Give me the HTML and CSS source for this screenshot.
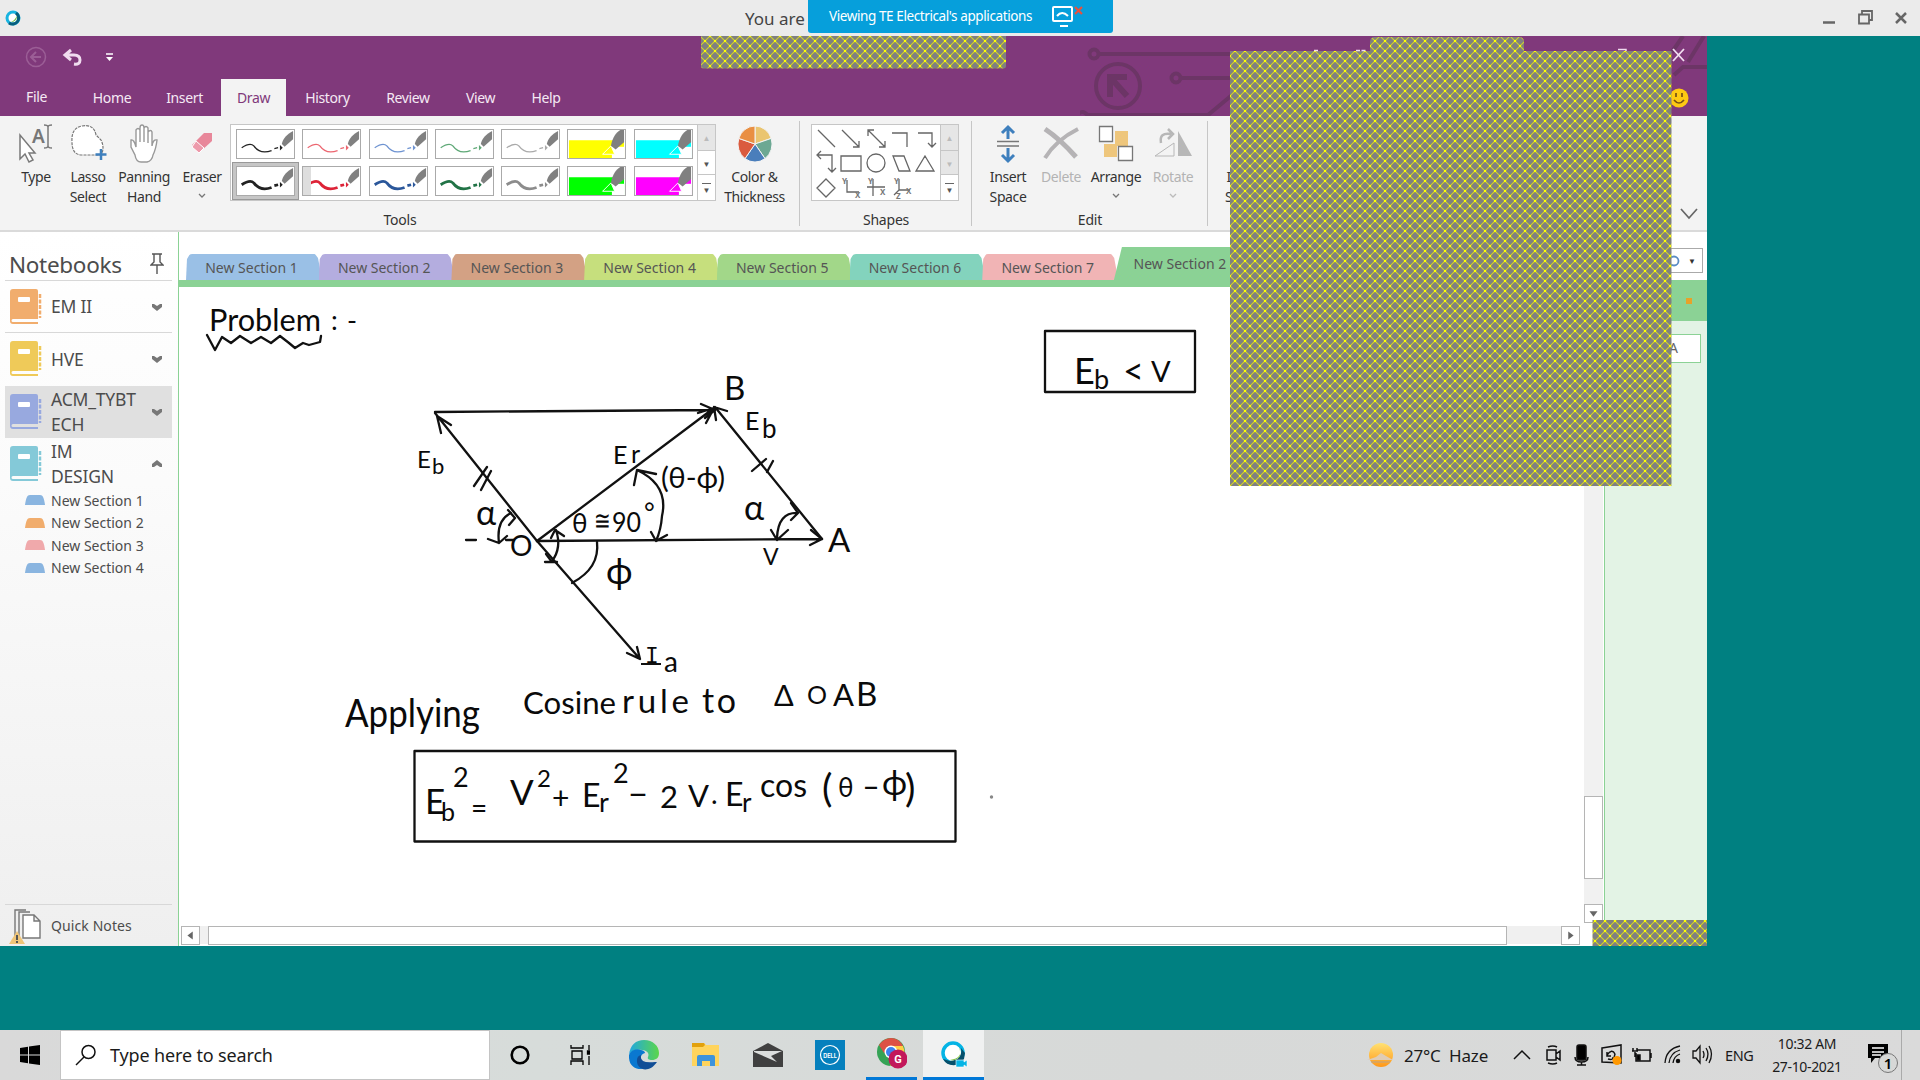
FILE: index.html
```html
<!DOCTYPE html>
<html lang="en">
<head>
<meta charset="utf-8">
<title>Viewing TE Electrical's applications</title>
<link rel="stylesheet" href="styles.css">
</head>
<body>
<svg class="defs" width="0" height="0">
  <symbol id="pen" viewBox="0 0 59 30">
    <path d="M4 19C10 15 14 14 17 17C22 24 28 25 36 22M39 20l4-1" fill="none" stroke="currentColor" stroke-width="var(--w)"/>
    <path d="M45 16l3 3-3 3z" fill="currentColor"/>
    <path d="M59 1v9L50 18l-3-3C48 9 53 4 59 1z" fill="#808080"/>
  </symbol>
  <symbol id="marker" viewBox="0 0 59 30">
    <path d="M0 11h59v19H0z" fill="currentColor"/>
    <path d="M46 18h13v12H46z" fill="#fff"/>
    <path d="M36 26l9-9 4 9z" fill="currentColor" stroke="#fff"/>
    <path d="M59 0v13L50 21l-5-4C46 9 51 2 55 0z" fill="#808080"/>
  </symbol>
  <symbol id="book" viewBox="0 0 32 36">
    <path d="M3 0h23q2 0 2 2v28H3q-1.500 0-1.500 1.500T3 33h25v2H3q-3 0-3-3V3q0-3 3-3z" fill="currentColor"/>
    <rect x="8" y="8" width="12" height="5" rx="1" fill="#fff"/>
    <path d="M30 5v24" stroke="currentColor" stroke-width="2.500" stroke-dasharray="4 1.500"/>
  </symbol>
  <symbol id="down" viewBox="0 0 10 8"><path d="M0 1h2l3 2 3-2h2v3L5 8 0 4z" fill="#777"/></symbol>
  <symbol id="caret" viewBox="0 0 8 6"><path d="M1 1l3 3 3-3" fill="none" stroke="currentColor" stroke-width="1.300"/></symbol>
  <symbol id="tab" viewBox="0 0 20 10"><path d="M0 10C1 3 2 0 5 0h10c3 0 4 3 5 10z" fill="currentColor"/></symbol>
</svg>

<header class="titlebar">
  <svg class="logo" width="16" height="16" viewBox="0 0 16 16"><circle cx="8" cy="8" r="6" fill="#fff" stroke="#18b3e0" stroke-width="3"/><path d="M11 3a6 6 0 0 1-7 10" fill="none" stroke="#075e7c" stroke-width="3"/><path d="M12 6c0 4-3 6-6 6 3-1 4-3 6-6z" fill="#6cbb45"/></svg>
  <span class="you">You are</span>
  <div class="wincontrols">
    <svg width="100" height="36" viewBox="0 0 100 36" fill="none" stroke="#666"><path d="M3 22.500h12" stroke-width="2.500"/><path d="M39 14.500h10v9H39zM42 14v-3h10v9h-3" stroke-width="1.800"/><path d="M76 13l10 10M86 13L76 23" stroke-width="2.500"/></svg>
  </div>
  <div class="banner"><span>Viewing TE Electrical's applications</span>
    <svg width="32" height="24" viewBox="0 0 32 24"><rect x="2" y="3" width="19" height="14" rx="1" fill="none" stroke="#fff" stroke-width="2"/><path d="M6 12q5-6 11 0M9 22h8" fill="none" stroke="#fff" stroke-width="2"/><path d="M24 3l7 7M31 3l-7 7" stroke="#e8503f" stroke-width="2.200"/></svg>
  </div>
</header>

<main class="desktop">
<section class="app">
  <div class="apphead">
    <svg class="circuit" width="627" height="80" viewBox="1080 36 627 80" fill="none" stroke="#6c3566" stroke-width="4">
      <circle cx="1118" cy="86" r="22"/><path d="M1110 97V77h17M1110 77l17 19" stroke-width="6"/>
      <circle cx="1094" cy="54" r="4.500"/><path d="M1099 54h140"/><circle cx="1176" cy="78" r="4.500"/><path d="M1181 78h50M1087 115h121l24-20"/><path d="M1076 117q6-10 13 0"/>
      <path d="M1672 52l11-16M1674 75l9-8h24M1688 62l16-26"/>
    </svg>
    <div class="quick">
      <svg width="110" height="43" viewBox="0 0 110 43" fill="none"><circle cx="16" cy="21" r="9.500" stroke="#9b5e96" stroke-width="1.500"/><path d="M21 21H11m5-5l-5 5 5 5" stroke="#9b5e96" stroke-width="2"/><path d="M51 14l-6 5 6 5M45 19h9q6 0 6 5t-6 4" stroke="#f0dcef" stroke-width="3"/><path d="M86 18h7" stroke="#fff" stroke-width="1.500"/><path d="M86 21h7l-3.500 4z" fill="#fff"/></svg>
      <svg class="headright" width="40" height="43" viewBox="0 0 40 43" fill="none"><path d="M6 13l11 12M17 13L6 25" stroke="#f2dff1" stroke-width="1.800"/></svg>
    </div>
    <nav class="menu">
      <span class="file">File</span><span class="home">Home</span><span class="insert">Insert</span><span class="draw">Draw</span><span class="history">History</span><span class="review">Review</span><span class="view">View</span><span class="help">Help</span>
      <svg class="smile" width="20" height="20" viewBox="0 0 20 20"><circle cx="10" cy="10" r="9.500" fill="#fdc913"/><path d="M7 5v4M13 5v4M5 12q5 6 10 0" fill="none" stroke="#765016" stroke-width="1.700"/></svg>
    </nav>
  </div>

  <div class="ribbon">
    <div class="group tools">
      <div class="body">
        <div class="tool type"><svg width="38" height="40" viewBox="0 0 38 40" fill="#fff" stroke="#7a7a7a" stroke-width="1.500"><path d="M3 11v24l5-5 4 8 4-2-4-7h6z"/><path d="M31 2v21M27 1q4 0 4 2 0-2 4-2M27 24q4 0 4-2 0 2 4 2" fill="none"/><text x="15" y="19" class="glyphA">A</text></svg><span>Type</span></div>
        <div class="tool lasso"><svg width="38" height="40" viewBox="0 0 38 40"><path d="M13 2q12-2 14 9l5 5q4 8 0 15H13Q3 31 3 18 2 4 13 2z" fill="#fff" stroke="#777" stroke-width="1.200" stroke-dasharray="3 1"/><path d="M32 25v11M26.500 30.500h11" stroke="#3e7fbd" stroke-width="2.500"/></svg><span>Lasso<br>Select</span></div>
        <div class="tool pan"><svg width="32" height="40" viewBox="0 0 32 40"><path d="M8 23V6q2-3 4 0v12-14q0-3 2-3t2 3v14V4q2-3 4 0v15-11q3-3 4 0v14q1-7 5-6-1 9-4 15-1 6-6 7h-6Q8 38 7 31L3 23V16q3-1 5 7z" fill="#fff" stroke="#999" stroke-width="1.400"/></svg><span>Panning<br>Hand</span></div>
        <div class="tool eraser"><svg width="30" height="40" viewBox="0 0 30 40"><path d="M17 9h8v8L13 28l-8-7z" fill="#e8879a"/><path d="M9 17l8 7-5 5-7-6z" fill="#ed9aab" stroke="#fff" stroke-width="1"/></svg><span>Eraser</span><svg class="caret" width="8" height="6"><use href="#caret"/></svg></div>
        <div class="gallery">
          <div class="pens">
            <svg class="p thin black"><use href="#pen"/></svg><svg class="p thin red"><use href="#pen"/></svg><svg class="p thin blue"><use href="#pen"/></svg><svg class="p thin green"><use href="#pen"/></svg><svg class="p thin gray"><use href="#pen"/></svg><svg class="p yellow"><use href="#marker"/></svg><svg class="p cyan"><use href="#marker"/></svg>
            <svg class="p thick black sel"><use href="#pen"/></svg><svg class="p thick red"><use href="#pen"/><path d="M0 0h8v28H0z" fill="#dedede"/></svg><svg class="p thick blue"><use href="#pen"/></svg><svg class="p thick green"><use href="#pen"/></svg><svg class="p thick gray"><use href="#pen"/></svg><svg class="p lime"><use href="#marker"/></svg><svg class="p magenta"><use href="#marker"/></svg>
          </div>
          <div class="spin"><i class="off">▲</i><i>▼</i><i class="more">▼</i></div>
        </div>
        <div class="tool color"><svg width="36" height="40" viewBox="-18 -20 36 40" stroke="#f3f3f3"><path d="M0 0V-18A17 18 0 0 1 16.200-5.600z" fill="#eac570"/><path d="M0 0L16.200-5.600A17 18 0 0 1 10 14.600z" fill="#6ca893"/><path d="M0 0L10 14.600A17 18 0 0 1-10 14.600z" fill="#4a7ebb"/><path d="M0 0L-10 14.600A17 18 0 0 1-16.200-5.600z" fill="#da5b3f"/><path d="M0 0L-16.200-5.600A17 18 0 0 1 0-18z" fill="#e98f42"/></svg><span>Color &amp;<br>Thickness</span></div>
      </div>
      <div class="caption">Tools</div>
    </div>
    <div class="group shapes">
      <div class="body">
        <div class="gallery">
          <svg width="128" height="75" viewBox="0 0 128 75" fill="none" stroke="#666" stroke-width="1.300">
            <path d="M6 5l17 17M30 5l17 17M47 16v6h-6M56 5l17 17M73 16v6h-6M56 11V5h6M80 8h15v14M106 8h14v14M116 18l4 4 4-4"/>
            <path d="M6 30h14v17M9 26l-4 4 4 4M16 43l4 4 4-4M29 31h20v15H29zM81 31h11l6 15H87zM113 31l9 15h-18z"/><circle cx="64" cy="38" r="9"/>
            <path d="M14 54l9 9-9 9-9-9zM35 55v12h12M61 54v17M55 62h18M87 54v11h11M87 65l-5 5"/>
            <g class="axes"><text x="30" y="59">Y</text><text x="43" y="73">X</text><text x="56" y="59">Y</text><text x="68" y="70">X</text><text x="82" y="59">Y</text><text x="94" y="69">X</text><text x="84" y="74">Z</text></g>
          </svg>
          <div class="spin"><i class="off">▲</i><i class="off">▼</i><i class="more">▼</i></div>
        </div>
      </div>
      <div class="caption">Shapes</div>
    </div>
    <div class="group edit">
      <div class="body">
        <div class="tool space"><svg width="24" height="40" viewBox="0 0 24 40" fill="none" stroke="#3e7fbd" stroke-width="3"><path d="M12 15V4M6 9l6-6 6 6M12 24v11M6 31l6 6 6-6"/><path d="M1 17.500h22M1 22h22" stroke="#777" stroke-width="1.500"/></svg><span>Insert<br>Space</span></div>
        <div class="tool delete off"><svg width="38" height="40" viewBox="0 0 38 40" fill="none" stroke="#b5b3b5"><path d="M3 5Q18 15 34 33" stroke-width="5"/><path d="M36 5Q14 16 3 34" stroke-width="4"/></svg><span>Delete</span></div>
        <div class="tool arrange"><svg width="36" height="40" viewBox="0 0 36 40"><path d="M17 7h13v15H17zM6 20h13v13H6z" fill="#eec67c"/><path d="M1.500 2.500h13v15h-13zM20.500 22.500h14v14h-14z" fill="#fff" stroke="#777" stroke-width="1.300"/></svg><span>Arrange</span><svg class="caret" width="8" height="6"><use href="#caret"/></svg></div>
        <div class="tool rotate off"><svg width="38" height="40" viewBox="0 0 38 40" fill="none" stroke="#b7b7b7"><path d="M24 7v25h14z" fill="#b7b7b7" stroke="none"/><path d="M20 19v13H1z"/><path d="M7 19Q5 8 17 10M14 5l5 5-5 5" stroke-width="2.500"/></svg><span>Rotate</span><svg class="caret" width="8" height="6"><use href="#caret"/></svg></div>
      </div>
      <div class="caption">Edit</div>
    </div>
    <div class="group rest">
      <div class="body"><div class="tool"><svg width="20" height="40" viewBox="0 0 20 40"><path d="M4 4.500h16M4 27.500h16" stroke="#888"/></svg><span>Ink to<br>Shape</span></div></div>
      <svg class="collapse" width="18" height="12" viewBox="0 0 18 12"><path d="M1 1l8 9 8-9" fill="none" stroke="#666" stroke-width="1.700"/></svg>
    </div>
  </div>

  <div class="work">
    <aside class="notebooks">
      <h1>Notebooks <svg width="14" height="22" viewBox="0 0 14 22" fill="none" stroke="#555" stroke-width="1.400"><path d="M2 1h10M4 1v8l-3 3h12l-3-3V1M7 12v9"/></svg></h1>
      <div class="nb orange line"><svg width="32" height="36"><use href="#book"/></svg><span>EM II</span><svg width="10" height="8"><use href="#down"/></svg></div>
      <div class="nb gold"><svg width="32" height="36"><use href="#book"/></svg><span>HVE</span><svg width="10" height="8"><use href="#down"/></svg></div>
      <div class="nb indigo active"><svg width="32" height="36"><use href="#book"/></svg><span>ACM_TYBT<br>ECH</span><svg width="10" height="8"><use href="#down"/></svg></div>
      <div class="nb aqua"><svg width="32" height="36"><use href="#book"/></svg><span>IM<br>DESIGN</span><svg class="up" width="10" height="8"><use href="#down"/></svg></div>
      <ul>
        <li><svg class="s1" width="20" height="10"><use href="#tab"/></svg>New Section 1</li>
        <li><svg class="s2" width="20" height="10"><use href="#tab"/></svg>New Section 2</li>
        <li><svg class="s3" width="20" height="10"><use href="#tab"/></svg>New Section 3</li>
        <li><svg class="s1" width="20" height="10"><use href="#tab"/></svg>New Section 4</li>
      </ul>
      <div class="quicknotes"><svg width="34" height="38" viewBox="0 0 34 38" fill="#fff" stroke="#777" stroke-width="1.400"><path d="M6 30V3h11M10 30V5h11" fill="none"/><path d="M14 8h11l6 6v17H14zM25 8v6h6"/><path d="M8 24l8 13H0z" fill="#efc578" stroke="none"/><path d="M8 28v5M8 34v2" stroke="#555" stroke-width="2"/></svg><span>Quick Notes</span></div>
    </aside>

    <div class="pagearea">
      <div class="tabs">
        <span class="t1">New Section 1</span><span class="t2">New Section 2</span><span class="t3">New Section 3</span><span class="t4">New Section 4</span><span class="t5">New Section 5</span><span class="t6">New Section 6</span><span class="t7">New Section 7</span><span class="t8">New Section 2</span>
        <div class="find"><svg width="12" height="14" viewBox="0 0 12 14"><circle cx="5" cy="7" r="4.500" fill="none" stroke="#5b8cc4" stroke-width="1.800"/></svg><i>▼</i></div>
      </div>
      <div class="band"></div>
      <div class="lower">
        <div class="canvas">
          <svg class="ink" width="1405" height="639" viewBox="179 287 1405 639">
            <g class="lines">
              <path d="M207 335l8 15 7-13 9 6 9-7 11 7 10-6 10 6 9-7 9 7 6 5 8-5 6 2 11-3 1-6"/>
              <path d="M435 412L714 410M701 404l14 6-10 8M714 408L537 541M698 413l16-5-8 15"/>
              <path d="M537 541L435 413M441 433l-4-17 14 9M537 541L822 539M811 530l11 9-12 6"/>
              <path d="M822 539L715 407M716 420l-2-13 13 4M537 541L640 659M627 653l13 6-3-12"/>
              <path d="M474 486l13-19M481 490l10-19M752 471l14-12M767 472l6-11"/>
              <path d="M637 470Q669 485 662 516Q661 530 656 541M634 485l3-15 19 4M651 532l5 9 11-6"/>
              <path d="M597 542Q600 568 572 583"/>
              <path d="M798 513Q778 512 777 538M791 503l7 10-7 7M771 530l6 10 11-10"/>
              <path d="M511 513Q496 520 499 543M508 510l7 8-6 7M488 539l11 4 8-7M466 540h10M506 540h8"/>
              <path d="M556 530Q562 548 552 561M551 538l4-8 9 6M545 562l12 0M546 554l6 8"/>
              <rect x="414.500" y="751" width="541" height="90.500"/><rect x="1045" y="331" width="150" height="61"/>
            </g>
            <g class="words">
              <text x="209" y="331" font-size="30" textLength="112" lengthAdjust="spacingAndGlyphs">Problem</text><text x="331" y="330" font-size="27" textLength="26">:-</text>
              <text x="724" y="400" font-size="33">B</text>
              <text x="745" y="430" font-size="25">E</text><text x="762" y="438" font-size="26">b</text>
              <text x="613" y="464" font-size="25">E</text><text x="631" y="463" font-size="25">r</text>
              <text x="661" y="488" font-size="29" textLength="64" lengthAdjust="spacingAndGlyphs">(θ-ϕ)</text>
              <text x="417" y="468" font-size="24">E</text><text x="432" y="474" font-size="22">b</text>
              <text x="476" y="525" font-size="34">α</text><text x="510" y="556" font-size="28">O</text>
              <text x="572" y="533" font-size="26">θ</text><text x="594" y="530" font-size="27" textLength="17" lengthAdjust="spacingAndGlyphs">≅</text><text x="612" y="532" font-size="27" textLength="29" lengthAdjust="spacingAndGlyphs">90</text><text x="644" y="522" font-size="26">°</text>
              <text x="744" y="520" font-size="34">α</text><text x="828" y="552" font-size="33">A</text><text x="763" y="565" font-size="23">V</text>
              <text x="606" y="584" font-size="36">ϕ</text><text x="645" y="663" font-size="23" class="serif">I</text><path class="serifbar" d="M641 664h20"/><text x="664" y="672" font-size="28">a</text>
              <text x="345" y="727" font-size="38" textLength="135" lengthAdjust="spacingAndGlyphs">Applying</text>
              <text x="523" y="714" font-size="30" textLength="93" lengthAdjust="spacingAndGlyphs">Cosine</text><text x="622" y="713" font-size="33" textLength="67" lengthAdjust="spacing">rule</text><text x="702" y="713" font-size="34" textLength="34">to</text>
              <text x="774" y="706" font-size="29">Δ</text><text x="807" y="704" font-size="25">O</text><text x="833" y="706" font-size="31">A</text><text x="856" y="706" font-size="33">B</text>
              <text x="425" y="814" font-size="35">E</text><text x="441" y="821" font-size="25">b</text><text x="453" y="787" font-size="27">2</text><text x="471" y="818" font-size="28">=</text>
              <text x="510" y="805" font-size="35">V</text><text x="537" y="787" font-size="24">2</text><text x="552" y="809" font-size="30">+</text><text x="582" y="807" font-size="32">E</text><text x="599" y="812" font-size="27">r</text><text x="613" y="783" font-size="27">2</text><text x="627" y="804" font-size="30" textLength="22" lengthAdjust="spacingAndGlyphs">-</text><text x="660" y="808" font-size="31">2</text><text x="688" y="807" font-size="31">V</text><text x="711" y="804" font-size="28">.</text><text x="725" y="806" font-size="32">E</text><text x="742" y="812" font-size="26">r</text><text x="760" y="797" font-size="32">cos</text>
              <text x="822" y="802" font-size="39">(</text><text x="838" y="797" font-size="26">θ</text><text x="862" y="797" font-size="28" textLength="18" lengthAdjust="spacingAndGlyphs">-</text><text x="882" y="795" font-size="34">ϕ</text><text x="905" y="802" font-size="39">)</text>
              <text x="1074" y="384" font-size="36">E</text><text x="1094" y="389" font-size="27">b</text><text x="1123" y="384" font-size="36">&lt;</text><text x="1151" y="382" font-size="29">V</text>
            </g>
            <circle cx="991.500" cy="797" r="1.700" fill="#888"/>
          </svg>
          <div class="hscroll"><svg class="btn" viewBox="0 0 19 19"><path d="M12 5v9L6 9.500z"/></svg><div class="hthumb"></div><svg class="btn" viewBox="0 0 19 19"><path d="M7 5v9l6-4.500z"/></svg></div>
        </div>
        <div class="vscroll"><div class="vthumb"></div><svg class="btn" viewBox="0 0 19 19"><path d="M5 7h9l-4.500 6z"/></svg></div>
        <div class="pages"><div class="pagehead"><i></i></div><div class="pageitem">A</div></div>
      </div>
    </div>
  </div>
  <svg class="masks" width="1707" height="910" viewBox="0 36 1707 910">
    <defs><pattern id="hatch" width="10" height="10" x="5" y="1" patternUnits="userSpaceOnUse"><rect width="10" height="10" fill="#808080"/><path d="M-1-1l12 12M11-1L-1 11" stroke="#cfcf2c" stroke-width="1.150"/><path d="M4 4h2v2H4zM0 0h1v1H0zM9 0h1v1H9zM0 9h1v1H0zM9 9h1v1H9z" fill="#ff0"/></pattern></defs>
    <path d="M701 36h305v30q0 2.500-3 2.500H704q-3 0-3-2.500zM1230 51h140V42q0-5 5-5h144q5 0 5 5v9h147.500v435H1230zM1592.500 920H1707v26h-114.500z" fill="url(#hatch)"/>
    <path d="M1314 50.500h4M1356 50.500h4M1361.500 50.500h4M1618 49.500h8v1.500" fill="none" stroke="#f0dcef" stroke-width="1.500"/>
  </svg>
</section>
</main>

<footer class="taskbar">
  <div class="start"><svg width="20" height="20" viewBox="0 0 20 20"><path d="M0 3l8-1.200V9.500H0zM9 1.600L20 0v9.500H9zM0 10.500h8v7.700L0 17zM9 10.500h11V20L9 18.400z"/></svg></div>
  <div class="search"><svg width="22" height="22" viewBox="0 0 22 22" fill="none" stroke="#111" stroke-width="1.500"><circle cx="13.500" cy="8" r="6.500"/><path d="M9 13l-8 8"/></svg><span>Type here to search</span></div>
  <div class="ti c"><svg width="20" height="20"><circle cx="10" cy="10" r="8.300" fill="none" stroke="#000" stroke-width="2.600"/></svg></div>
  <div class="ti v"><svg width="20" height="20" viewBox="0 0 20 20" fill="none" stroke="#000" stroke-width="1.300"><path d="M1 0v3h12V0M1 20v-4h12v4M2 6h10v8H2zM19 0v5M19 11v9"/><path d="M17.500 6h3v3h-3z" fill="#000"/></svg></div>
  <div class="ti e"><svg width="30" height="30" viewBox="0 0 30 30"><defs><linearGradient id="eg"><stop stop-color="#20a7e0"/><stop offset="1" stop-color="#5bd64b"/></linearGradient></defs><path d="M0 15C1 5 7 0 15 0c9 0 15 6 15 13 0 5-3 7-7 7-3 0-5-1-4-3 2-4-2-7-6-7C7 9 2 11 0 15z" fill="url(#eg)"/><path d="M0 15C2 10 7 8 12 10q4 1 4 3-5 1-4 7 2 6 7 7c-6 4-20 3-19-12z" fill="#0a78d0"/><path d="M12 15q-2 9 14 7l2 0C20 34 7 30 8 20q0-4 4-5z" fill="#114e96"/></svg></div>
  <div class="ti f"><svg width="28" height="24" viewBox="0 0 28 24"><path d="M0 0h12l2 2h13v21H0z" fill="#ffd45d"/><path d="M0 0h12l1 2-2 2H0z" fill="#e2a10c"/><path d="M5 23v-9q0-2 2-2h14q2 0 2 2v9h-5v-5h-8v5z" fill="#3d93db"/></svg></div>
  <div class="ti m"><svg width="30" height="24" viewBox="0 0 30 24"><path d="M0 8L15 0l15 8v16H0z" fill="#404040"/><path d="M1 8h28l-11 5 6 6L1 9z" fill="#dcdedd"/></svg></div>
  <div class="ti d"><svg width="30" height="30" viewBox="0 0 30 30"><path fill="#0580bd" d="M0 0h30v30H0z"/><circle cx="15" cy="15" r="9.500" fill="none" stroke="#fff" stroke-width="1.200"/><text x="15" y="17.600" text-anchor="middle">DELL</text></svg></div>
  <div class="ti g"><svg width="30" height="31" viewBox="0 0 30 31"><circle cx="14" cy="14" r="14" fill="#35a356"/><path d="M2 7Q7 0 14 0q8 0 12 8H14L7 15z" fill="#dd5144"/><path d="M14 8h12q4 9-2 15L13 28l6-12z" fill="#ffce44"/><circle cx="14" cy="14" r="6.500" fill="#fff"/><circle cx="14" cy="14" r="5" fill="#3c82f0"/><circle cx="21" cy="21" r="9.500" fill="#c2185b"/><text x="21" y="25" text-anchor="middle">G</text></svg></div>
  <div class="ti w"><svg width="28" height="28" viewBox="0 0 28 28"><circle cx="13" cy="13" r="10" fill="#fff" stroke="#05b4e5" stroke-width="3.500"/><path d="M3 19A12 12 0 0 0 24 19l1-6-4-5q2 12-11 13z" fill="#064f6b"/><path d="M19 7q5 11-9 13 7 1 10-4 1-4-1-9z" fill="#7dc242"/><path d="M16 20h8v2l3-2v7l-3-2v2h-8z" fill="#05b4e5" stroke="#fff" stroke-width=".6"/></svg></div>
  <div class="tray">
    <svg class="sun" width="30" height="26" viewBox="0 0 30 26"><defs><linearGradient id="sg" x2="0" y2="1"><stop stop-color="#ffe173"/><stop offset="1" stop-color="#ff9718"/></linearGradient></defs><circle cx="15" cy="13" r="12" fill="url(#sg)"/><path d="M1 18h26l-7-4-5-3-5 4z" fill="#dfccb5"/><path d="M5 20h19" stroke="#b9a38c"/></svg>
    <span class="weather">27°C&nbsp; Haze</span>
    <svg class="trayicons" width="212" height="50" viewBox="1510 1030 212 50" fill="none" stroke="#111" stroke-width="1.500">
      <path d="M1514 1059l8-8 8 8"/>
      <path d="M1547 1050h9v10h-9zM1556 1054l4-3v9l-4-3M1548 1047q5-2 9 0M1548 1063q5 2 9 0"/>
      <rect x="1577" y="1045" width="9" height="15" rx="2" fill="#000"/><path d="M1575 1057q0 5 6.500 5t6.500-5M1581.500 1062v3M1577 1065h9"/>
      <path d="M1602 1048l19-3v18l-19-1zM1607 1052l0 4h4M1607 1055q5-7 8-1M1616 1058h-4M1615 1054q-1 7-7 5"/><circle cx="1617" cy="1060.500" r="4.500" fill="#ff9800" stroke="none"/>
      <path d="M1637 1050h13v11h-14v-8M1651 1053v5M1632 1051h6M1633 1051v-3M1637 1051v-3M1635 1052v5"/><path d="M1637 1055h3v5h-3z" fill="#000"/>
      <path d="M1665 1063q1-14 15-17M1669 1063q1-10 11-13M1673 1063q1-7 7-9" stroke-width="1.300"/><circle cx="1678" cy="1061" r="1.500" fill="#000"/>
      <path d="M1693 1051h3l4-5v17l-4-5h-3zM1703 1051q2 4 0 7M1706 1048q4 6 0 13M1709 1046q5 8 0 17" stroke-width="1.300"/>
    </svg>
    <span class="eng">ENG</span>
    <div class="clock">10:32 AM<br>27-10-2021</div>
    <svg class="note" width="32" height="32" viewBox="0 0 32 32"><path d="M1 1h20v14H8l-4 5v-5H1z"/><path d="M5 5h12M5 9h12M5 12h9" stroke="#fff" stroke-width="1.300"/><circle cx="21" cy="20" r="9.500" fill="#d7d8d7" stroke="#777"/><text x="21" y="26" text-anchor="middle">1</text></svg>
  </div>
</footer>
</body>
</html>
```

FILE: styles.css
```css
*{box-sizing:border-box}
body{margin:0;width:1920px;height:1080px;overflow:hidden;display:flex;flex-direction:column;font-family:"Noto Sans","Open Sans",sans-serif;color:#333;font-size:14px;position:relative}
i{font-style:normal}
svg{display:block;flex:none}
.defs{position:absolute}
.titlebar{height:36px;background:#ebebeb;display:flex;align-items:center;padding-left:4px;position:relative;flex:none}
.logo{margin-left:1px}
.you{margin-left:724px;font-size:17px;color:#444;white-space:nowrap}
.wincontrols{margin-left:auto;width:100px}
.banner{position:absolute;left:808px;top:0;width:305px;height:33px;background:#069fdb;border-radius:0 0 3px 3px;color:#fff;font-size:13.500px;letter-spacing:-.4px;display:flex;align-items:center;padding:0 0 1px 21px;white-space:nowrap}
.banner svg{margin-left:auto;margin-right:30px}
.desktop{height:994px;background:#008081;flex:none}
.app{width:1707px;height:910px;background:#fff;position:relative;display:flex;flex-direction:column}
.apphead{height:80px;background:#80397b;position:relative;flex:none}
.circuit{position:absolute;right:0;top:0}
.quick{height:43px;display:flex;justify-content:space-between;padding-left:20px;position:relative}
.menu{height:37px;display:flex;align-items:center;color:#f5e9f4;position:relative;font-size:14px;letter-spacing:-.35px}
.menu span{height:37px;line-height:38px;text-align:center;flex:none}
.file{width:73px}.menu .file{line-height:36px}.home{width:78px}.insert{width:67px}
.draw{width:65px;background:#f3f3f3;color:#80397b;margin-left:3px}
.history{width:83px}.review{width:78px}.view{width:67px}.help{width:64px}
.smile{margin-left:auto;margin-right:18px}
.ribbon{height:116px;background:#f3f3f3;border-bottom:2px solid #dadada;display:flex;flex:none;line-height:20px}
.group{position:relative;display:flex;flex-direction:column;background:linear-gradient(#c6c6c6,#c6c6c6) right 5px/1px 105px no-repeat}
.tools{width:800px}.shapes{width:172px}.edit{width:236px}
.rest{flex:1;background:none;flex-direction:row;justify-content:space-between;align-items:flex-end;padding:0 9px 10px 17px}
.rest .body{align-self:flex-start}
.body{display:flex;height:95px;padding-top:8px}
.tools .body{padding-left:8px}.shapes .body{padding-left:11px}.edit .body{padding-left:6px}
.caption{text-align:center;line-height:21px;letter-spacing:-.2px}
.tool{display:flex;flex-direction:column;align-items:center;text-align:center;white-space:nowrap;letter-spacing:-.4px;line-height:20px}
.tool>svg:first-child{margin-bottom:3px}
.tool .caret{margin-top:6px;color:#777}
.off{color:#b3b3b3}.tool.off .caret{color:#bbb}
.type{width:56px}.lasso{width:48px}.pan{width:64px}.eraser{width:52px}.color{width:77px}.space{width:60px}.delete{width:46px}.arrange{width:64px}.rotate{width:50px}
.glyphA{font-size:19px;font-weight:600;fill:#777;stroke:none;letter-spacing:0}
.gallery{height:77px;border:1px solid #c6c6c6;background:#fff;display:flex;justify-content:space-between}
.tools .gallery{width:486px;margin-left:2px}
.shapes .gallery{width:148px}
.pens{display:grid;grid-template-columns:repeat(7,59px);gap:7.3px;padding:4px 0 0 5px;height:75px;grid-template-rows:30px 30px}
.p{width:59px;height:30px;border:1px solid #aaa;background:#fff}
.thin{--w:1.4}.thick{--w:3}
.black{color:#222}.red{color:#dd2337}.thin.red{color:#ec6670}.blue{color:#2b579a}.thin.blue{color:#6e93d1}.green{color:#217346}.thin.green{color:#5ea876}.gray{color:#8c8c8c}
.thin.gray{color:#aaa}
.yellow{color:#ff0}.cyan{color:#0ff}.lime{color:#0f0}.magenta{color:#f0f}
.sel{outline:3px solid #c6c6c6;box-shadow:0 0 0 4px #999}
.spin{width:18px;border-left:1px solid #c6c6c6;display:grid;grid-template-rows:26px 24px 25px}
.spin i{font-size:8px;line-height:25px;text-align:center;border-bottom:1px solid #c6c6c6;color:#555}
.spin i:last-child{border-bottom:0}
.spin i.off{background:#e6e6e6;color:#bbb}
.spin .more{background:linear-gradient(#666,#666) 50% 8px/9px 1px no-repeat;line-height:30px}
.axes text{font:700 8px "Noto Sans",sans-serif;fill:#777;stroke:none}
.work{flex:1;display:flex;min-height:0}
.notebooks{width:178px;background:linear-gradient(#fff,#fbfbfb 35%,#efefef);padding:0 6px 0 5px;display:flex;flex-direction:column;color:#4c4c4c;flex:none}
h1{margin:0;height:49px;padding:19px 8px 0 4px;border-bottom:1px solid #d8d8d8;font:400 22.5px/28px "Noto Sans",sans-serif;letter-spacing:-.3px;display:flex;justify-content:space-between}
h1 svg{margin-top:2px}
.nb{height:52.300px;display:flex;align-items:center;padding:0 10px 0 5px;font-size:17.500px;line-height:25px;letter-spacing:-.2px;flex:none}
.nb span{flex:1;margin-left:9px;color:#4c4c4c;white-space:nowrap}
.line{border-bottom:1px solid #d8d8d8}
.orange{color:#f1ad6d}.gold{color:#efca59}.indigo{color:#98a9df}.aqua{color:#84c9d8}
.active{background:#e0e0e0}
.up{transform:rotate(180deg)}
ul{list-style:none;margin:-1px 0 0;padding:0 0 0 20px}
li{height:22.500px;display:flex;align-items:center;gap:6px;white-space:nowrap;font-size:14px}
.s1{color:#8ab5e0}.s2{color:#f1ad6d}.s3{color:#f0a9ab}
.quicknotes{margin-top:auto;height:42px;border-top:1px solid #d8d8d8;display:flex;align-items:center;padding:0 0 0 4px;gap:8px;letter-spacing:.1px}
.pagearea{flex:1;border-left:1px solid #8bd295;display:flex;flex-direction:column;min-width:0}
.tabs{height:48px;display:flex;align-items:flex-end;padding:0 4px 0 7px;position:relative;flex:none}
.tabs span{width:136px;height:26px;margin-right:-3.300px;border-radius:6px 8px 0 0;clip-path:polygon(4px 0,129px 0,132px 4px,100% 100%,0 100%,1px 5px);text-align:center;font-size:14px;line-height:27px;color:#555;white-space:nowrap;flex:none;padding-right:5px}
.t1{background:#9ac0e6}.t2{background:#b4addf}.t3{background:#d3a184}.t4{background:#c6df7d}.t5{background:#a2d789}.t6{background:#83d3bd}.t7{background:#f1b4b5}
.tabs .t8{background:#8bd295;height:33px;line-height:34px;width:150px;clip-path:polygon(8px 0,100% 0,100% 100%,0 100%);padding-right:18px;margin-left:-1px}
.find{margin-left:auto;width:60px;height:25px;border:1px solid #aaa;margin-bottom:7px;display:flex;align-items:center;justify-content:flex-end;gap:7px;padding-right:6px;font-size:8px}
.band{height:7px;background:#8bd295;flex:none}
.lower{flex:1;display:flex;min-height:0}
.canvas{width:1405px;flex:none;display:flex;flex-direction:column}
.lines{fill:none;stroke:#111;stroke-width:2.300;stroke-linecap:round;stroke-linejoin:round}
.words{font-family:Lato,"Noto Sans",sans-serif;fill:#0a0a0a;font-weight:400}
.words .serif{font-family:"Liberation Mono",monospace}
.serifbar{stroke:#111;stroke-width:2}
.hscroll{height:20px;display:flex;padding-left:2px;background:linear-gradient(#f0f0f0,#f0f0f0) 20px 0/1364px 18px no-repeat}
.btn{width:19px;height:19px;border:1px solid #b5b5b5;background:#fff;fill:#666}
.hthumb{width:1299px;height:19px;border:1px solid #b5b5b5;background:#fff;margin:0 54px 0 8px}
.vscroll{width:19px;background:#f1f1f1;padding-top:509px;margin-bottom:23px}
.vthumb{height:83px;border:1px solid #b5b5b5;background:#fff;margin-bottom:25px}
.pages{flex:1;margin-left:1px;border-left:1px solid #8bd295;background:#e3f3e5}
.pagehead{height:34px;background:#8bd295;display:flex;align-items:center;justify-content:flex-end;padding:0 15px 7px 0}
.pagehead i{width:6px;height:6px;background:#e7a22a}
.pageitem{margin:13px 6px 0 5px;height:29px;border:1px solid #8bd295;background:#fff;text-align:right;padding-right:22px;line-height:26px;font-size:14px;color:#666}
.masks{position:absolute;left:0;top:0}
.taskbar{height:50px;background:linear-gradient(90deg,#d9d9d9,#d7dcda 28%,#d7d9d8 60%,#dadada);display:flex;flex:none;color:#1b1b1b}
.start{width:60px;display:grid;place-items:center}
.search{width:430px;background:#fff;border:1px solid #c4c4c4;display:flex;align-items:center;padding-left:14px;gap:13px;font-size:18px;letter-spacing:-.15px}
.ti{display:grid;place-items:center}
.c{width:60px}.v{width:60px}.e{width:67px}.f{width:58px}.m{width:66px}.d{width:58px}
.d text{font:700 5.500px Inter,sans-serif;fill:#fff}
.g{width:51px;margin-left:7px;border-bottom:3px solid #0078d7}
.g text{font:700 11px Roboto,sans-serif;fill:#fff}
.w{width:61px;margin-left:6px;background:#f0f1f1;border-bottom:3px solid #0078d7}
.tray{margin-left:auto;width:554px;display:flex;align-items:center;position:relative}
.weather{font-size:17px;letter-spacing:-.2px;width:106px;margin-left:8px;white-space:nowrap}
.eng{font-size:14.500px;letter-spacing:-.4px;width:35px;margin-left:3px}
.clock{width:90px;margin-left:2px;text-align:center;font-size:14px;line-height:23px;letter-spacing:-.35px}
.note{margin-left:15px;margin-top:8px}
.note text{font:600 15px "Noto Sans",sans-serif}
.tray::after{content:"";width:1px;height:50px;background:#aaa;margin-left:2px}
```
